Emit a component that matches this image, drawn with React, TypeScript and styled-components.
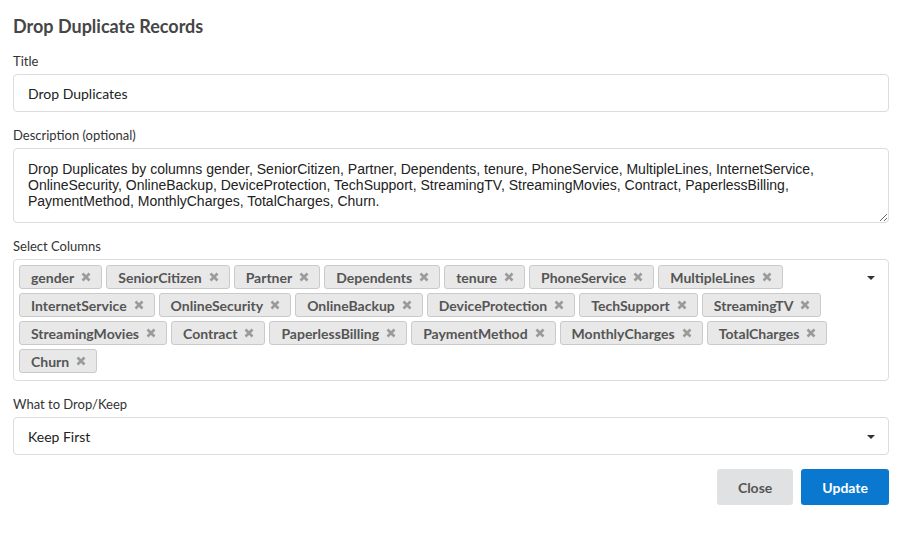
import React from "react";
import styled, { createGlobalStyle } from "styled-components";

const Global = createGlobalStyle`
  html, body { margin: 0; padding: 0; background: #fff; }
  body { font-family: Lato, "Noto Sans", sans-serif; color: #333; }
  * { box-sizing: border-box; }
`;

const Page = styled.div`
  padding: 14px 16px 0 13px;
  width: 905px;
`;

const Heading = styled.h1`
  margin: 0 0 15px;
  font-size: 18px;
  line-height: 24px;
  font-weight: 700;
  color: #464646;
`;

const Field = styled.div<{ $gap?: number }>`
  margin-bottom: ${(p) => p.$gap ?? 15}px;
`;

const Label = styled.div`
  font-size: 13px;
  line-height: 16px;
  color: #333;
  margin-bottom: 5px;
`;

const TextInput = styled.input`
  display: block;
  width: 100%;
  height: 38px;
  border: 1px solid #dcdcdc;
  border-radius: 4px;
  padding: 0 14px;
  font-family: Lato, sans-serif;
  font-size: 14px;
  color: #222;
  outline: none;
`;

const TextArea = styled.textarea`
  display: block;
  width: 100%;
  height: 75px;
  border: 1px solid #dcdcdc;
  border-radius: 4px;
  padding: 12px 14px;
  font-family: "Liberation Sans", Arial, sans-serif;
  font-size: 14px;
  line-height: 16px;
  color: #222;
  resize: vertical;
  outline: none;
`;

const MultiBox = styled.div`
  position: relative;
  border: 1px solid #dcdcdc;
  border-radius: 4px;
  padding: 5px 40px 5px 5px;
  display: flex;
  flex-wrap: wrap;
  gap: 4px;
  min-height: 122px;
  align-content: flex-start;
`;

const Tag = styled.span`
  display: inline-flex;
  align-items: center;
  height: 24px;
  padding: 0 10px 0 11px;
  background: #e8e8e8;
  border: 1px solid #cacaca;
  border-radius: 3px;
  font-size: 14px;
  font-weight: 700;
  color: #555;
  gap: 7px;
`;

const Caret = styled.span<{ $top: number }>`
  position: absolute;
  right: 13px;
  top: ${(p) => p.$top}px;
  width: 0;
  height: 0;
  border-left: 4px solid transparent;
  border-right: 4px solid transparent;
  border-top: 4px solid #333;
`;

const SelectBox = styled.div`
  position: relative;
  height: 38px;
  border: 1px solid #dcdcdc;
  border-radius: 4px;
  padding: 0 14px;
  display: flex;
  align-items: center;
  font-size: 14px;
  color: #222;
`;

const Actions = styled.div`
  display: flex;
  justify-content: flex-end;
  gap: 8px;
`;

const Button = styled.button<{ $primary?: boolean }>`
  height: 36px;
  border: none;
  border-radius: 3px;
  padding: 0 21px;
  font-family: Lato, sans-serif;
  font-size: 14px;
  font-weight: 700;
  background: ${(p) => (p.$primary ? "#0b78d0" : "#e0e1e2")};
  color: ${(p) => (p.$primary ? "#fff" : "#555")};
  cursor: pointer;
`;

const XIcon = () => (
  <svg width="10" height="10" viewBox="0 0 10 10">
    <path d="M1.5 1.5 L8.5 8.5 M8.5 1.5 L1.5 8.5" stroke="#9a9a9a" strokeWidth="2.6" strokeLinecap="butt" />
  </svg>
);

const columns = [
  "gender", "SeniorCitizen", "Partner", "Dependents", "tenure", "PhoneService", "MultipleLines",
  "InternetService", "OnlineSecurity", "OnlineBackup", "DeviceProtection", "TechSupport", "StreamingTV",
  "StreamingMovies", "Contract", "PaperlessBilling", "PaymentMethod", "MonthlyCharges", "TotalCharges", "Churn",
];

export default function App() {
  return (
    <Page>
      <Global />
      <Heading>Drop Duplicate Records</Heading>
      <Field>
        <Label>Title</Label>
        <TextInput defaultValue="Drop Duplicates" />
      </Field>
      <Field>
        <Label>Description (optional)</Label>
        <TextArea
          defaultValue={`Drop Duplicates by columns ${columns.join(", ")}.`}
        />
      </Field>
      <Field>
        <Label>Select Columns</Label>
        <MultiBox>
          {columns.map((c) => (
            <Tag key={c}>
              {c}
              <XIcon />
            </Tag>
          ))}
          <Caret $top={16} />
        </MultiBox>
      </Field>
      <Field $gap={14}>
        <Label>What to Drop/Keep</Label>
        <SelectBox>
          Keep First
          <Caret $top={17} />
        </SelectBox>
      </Field>
      <Actions>
        <Button>Close</Button>
        <Button $primary>Update</Button>
      </Actions>
    </Page>
  );
}
